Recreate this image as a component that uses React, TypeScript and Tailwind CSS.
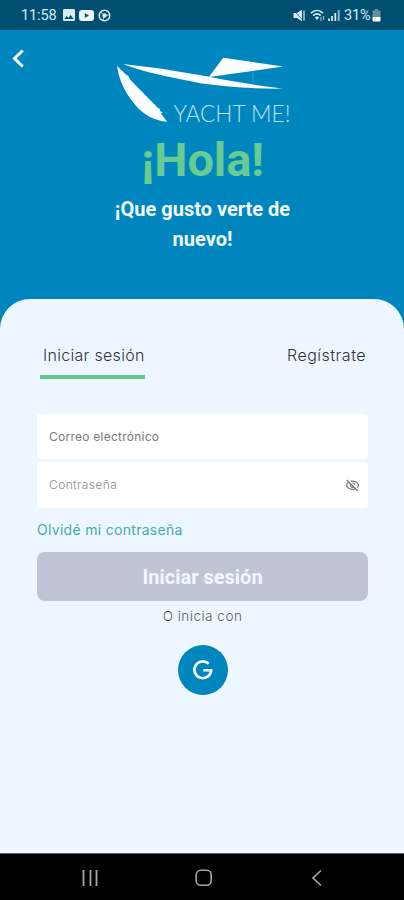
import { useState } from "react";
import {
  MdImage,
  MdOutlineVisibility,
  MdOutlineVisibilityOff,
} from "react-icons/md";

function StatusBar() {
  return (
    <div className="flex items-center justify-between h-[30px] pl-[21px] pr-[23px] bg-[#004f70] text-[#d7ecf5] font-['Roboto',sans-serif]">
      {/* Clock and notifications */}
      <div className="flex items-center">
        <span className="w-[37px] pt-[2px] text-[14.5px] leading-none tracking-[-0.1px]">
          11:58
        </span>
        <MdImage className="w-[16px] h-[16px] ml-[3px]" />
        <svg className="w-[15px] h-[11px] ml-[1.5px]" viewBox="0 0 15 11">
          <rect width="15" height="11" rx="3" fill="#eef8fc" />
          <path d="M5.8 3v5l4.2-2.5z" fill="#004f70" />
        </svg>
        <svg className="w-[13px] h-[13px] ml-[4px]" viewBox="0 0 13 13">
          <circle cx="6.5" cy="6.5" r="5.3" fill="none" stroke="currentColor" strokeWidth="1.5" />
          <circle cx="6.5" cy="6.5" r="2.2" fill="currentColor" />
          <path d="M8 6 12 6.2M5 5.6 3 3M5.8 8 5 11" stroke="currentColor" strokeWidth=".8" />
        </svg>
      </div>

      {/* Signal and battery */}
      <div className="flex items-center">
        <svg className="w-[12px] h-[13px]" viewBox="0 0 12 13">
          <path d="M.5 4h3.3L9 .8v11.4L3.8 9H.5z" fill="currentColor" />
          <path d="M1 1.5 10 11.5" stroke="#004f70" strokeWidth=".7" />
          <path d="M11 1.5v10" stroke="currentColor" strokeWidth="1.2" />
        </svg>
        <svg className="w-[15px] h-[12px] ml-[5px]" viewBox="0 0 15 12">
          <path
            d="M1 4.2C4.6.6 9.4.6 13 4.2M3.2 6.6c2.4-2.2 5.2-2.2 7.6 0"
            fill="none"
            stroke="currentColor"
            strokeWidth="1.7"
          />
          <path d="M4.8 8.3q2.2-1.6 4.4 0L7 11z" fill="currentColor" />
          <path d="M11 8v4M13.5 7v4" stroke="currentColor" strokeWidth=".8" />
        </svg>
        <svg className="w-[12px] h-[12px] ml-[3px]" viewBox="0 0 12 12">
          <path d="M1 12V9.5M4 12V7M7.3 12V4" stroke="currentColor" strokeWidth="1.8" />
          <path d="M10.7 12V1" stroke="currentColor" strokeWidth="1.8" opacity=".7" />
        </svg>
        <span className="w-[28px] ml-[4px] pt-[2px] text-[14.5px] leading-none tracking-[-0.1px]">
          31%
        </span>
        <svg className="w-[9px] h-[13px]" viewBox="0 0 9 13">
          <path d="M3 0h3v1.5h2.5V8h-8V1.5H3z" fill="#66909e" />
          <path d="M.5 8h8v3.5q0 1-1 1h-6q-1 0-1-1z" fill="#fff" />
        </svg>
      </div>
    </div>
  );
}

function Logo() {
  return (
    <svg className="w-[180px] h-[80px]" viewBox="113 54 180 80" fill="#fbfefe">
      <path d="M117 66 L126.5 75 L128 75.5 L130 79.5 L158.5 108.5 L160.5 109 L159.5 110.5 L162.5 112.5 L161 113.5 L167.2 121.8 C151 120 141 113 133 102 C125 92 119 80 117 66Z" />
      <path d="M123 64 L160 68.6 L208.3 76.6 C232 82 257 85 282.5 88.6 C256 89 227 87 202 83.6 C183 79 151 75 123 64Z" />
      <path d="M223.3 57.7 L283 66.6 L208.8 77Z" />
      <path d="M253 72v11" stroke="#62b5d9" strokeWidth=".6" />
      <text
        x="173.5"
        y="121.6"
        fontFamily="Lato, sans-serif"
        fontWeight="300"
        fontSize="23.5"
        fill="#b9e2f3"
        textLength="117"
        lengthAdjust="spacingAndGlyphs"
      >
        YACHT ME!
      </text>
    </svg>
  );
}

function App() {
  const [tab, setTab] = useState<"login" | "register">("login");
  const [email, setEmail] = useState("");
  const [password, setPassword] = useState("");
  const [showPassword, setShowPassword] = useState(false);

  return (
    <div className="flex flex-col w-full h-screen bg-[#0086be] font-['Inter',sans-serif]">
      <StatusBar />

      {/* Header */}
      <header className="flex items-start h-[269px] shrink-0 font-['Roboto',sans-serif]">
        <button className="w-[101px] pl-[11px] pt-[19px]" aria-label="Volver">
          <svg className="w-[14px] h-[19px]" viewBox="0 0 14 19">
            <path d="M11.7 1.5 3.5 9.5l8.2 8" fill="none" stroke="#fff" strokeWidth="3" />
          </svg>
        </button>
        <div className="flex flex-col items-center w-[203px] pt-[24px]">
          <Logo />
          <h1 className="mt-px text-[47px] leading-[50px] font-bold tracking-[-0.1px] text-[#67cc91]">
            ¡Hola!
          </h1>
          <p className="mt-[9px] text-[20px] leading-[30px] font-bold text-center text-[#f0fafd] w-[190px]">
            ¡Que gusto verte de nuevo!
          </p>
        </div>
      </header>

      {/* Form */}
      <main className="flex flex-col flex-1 pl-[37px] pr-[36px] bg-[#eef7ff] rounded-t-[30px]">
        <div className="flex justify-between mt-[45px] pl-[3px] pr-px">
          <button
            onClick={() => setTab("login")}
            className={`${
              tab === "login" ? "border-[#62c88c]" : "border-transparent"
            } w-[105px] h-[35px] pl-[3px] pb-[8px] border-b-4 text-[16px] leading-[23px] font-light tracking-[0.3px] text-left whitespace-nowrap text-[#303438]`}
          >
            Iniciar sesión
          </button>
          <button
            onClick={() => setTab("register")}
            className={`${
              tab === "register" ? "border-[#62c88c]" : "border-transparent"
            } w-[80px] h-[35px] pb-[8px] border-b-4 text-[16px] leading-[23px] font-light tracking-[0.5px] text-left whitespace-nowrap text-[#303438]`}
          >
            Regístrate
          </button>
        </div>

        <input
          type="email"
          placeholder="Correo electrónico"
          value={email}
          onChange={(e) => setEmail(e.target.value)}
          className="w-full h-[45px] mt-[35px] px-[12px] rounded-[4px] bg-white text-[12px] tracking-[0.25px] outline-none placeholder:text-[#7b7b7b]"
        />
        <div className="flex items-center h-[46px] mt-[3px] pl-[12px] pr-[8px] rounded-[4px] bg-white">
          <input
            type={showPassword ? "text" : "password"}
            placeholder="Contraseña"
            value={password}
            onChange={(e) => setPassword(e.target.value)}
            className="flex-1 min-w-0 text-[12px] font-light tracking-[0.4px] outline-none placeholder:text-[#8d8d8d]"
          />
          <button onClick={() => setShowPassword((prev) => !prev)} aria-label="Mostrar">
            {showPassword ? (
              <MdOutlineVisibility className="w-[15px] h-[15px] text-[#777]" />
            ) : (
              <MdOutlineVisibilityOff className="w-[15px] h-[15px] text-[#777]" />
            )}
          </button>
        </div>

        <a className="mt-[12px] text-[14px] leading-[20px] tracking-[0.3px] text-[#43adab]">
          Olvidé mi contraseña
        </a>
        <button className="h-[49px] mt-[12px] rounded-[8px] bg-[#bfc5d5] text-[20px] font-bold text-[#f1f8ff] font-['Roboto',sans-serif]">
          Iniciar sesión
        </button>
        <p className="mt-[5px] text-[13.5px] leading-[20px] font-light tracking-[0.5px] text-center text-[#575d61]">
          O inicia con
        </p>
        <button
          className="flex items-center justify-center self-center w-[50px] h-[50px] mt-[19px] rounded-full bg-[#0086be]"
          aria-label="Google"
        >
          <svg className="w-[22px] h-[22px]" viewBox="0 0 22 22">
            <path
              d="M16.7 4.8A8.4 8.4 0 1 0 19.2 11.2H11.2"
              fill="none"
              stroke="#f7fdff"
              strokeWidth="2.6"
            />
          </svg>
        </button>
      </main>

      {/* System navigation */}
      <nav className="flex items-center h-[47px] pt-[2px] pl-[82px] bg-black border-t border-[#596166] text-[#a5a5a5]">
        <svg className="w-[17px] h-[16px]" viewBox="0 0 17 16">
          <path d="M1.5 0v16M8.5 0v16M14.5 0v16" stroke="currentColor" strokeWidth="1.8" />
        </svg>
        <svg className="w-[18px] h-[18px] ml-[96px]" viewBox="0 0 18 18">
          <rect x="1.2" y="1.2" width="15" height="15" rx="4.5" fill="none" stroke="currentColor" strokeWidth="1.6" />
        </svg>
        <svg className="w-[12px] h-[18px] ml-[98px]" viewBox="0 0 12 18">
          <path d="M10 1.5 2 9l8 7.5" fill="none" stroke="currentColor" strokeWidth="1.7" />
        </svg>
      </nav>
    </div>
  );
}

export default App;
